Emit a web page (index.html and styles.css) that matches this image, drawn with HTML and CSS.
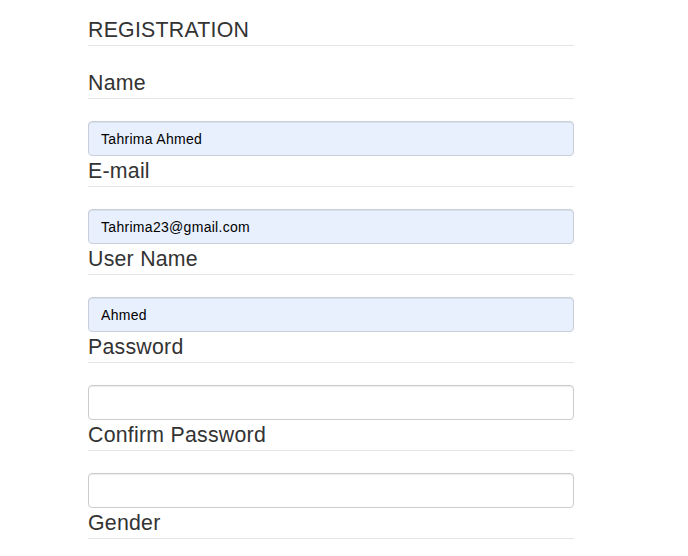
FILE: index.html
```html
<!DOCTYPE html>
<html lang="en">
<head>
<meta charset="utf-8">
<title>Registration</title>
<link rel="stylesheet" href="styles.css">
</head>
<body>
<form class="reg-form">
  <fieldset class="reg-set">
    <legend class="reg-legend">REGISTRATION</legend>
    <legend class="reg-legend">Name</legend>
    <input class="reg-input is-filled" type="text" value="Tahrima Ahmed">
    <legend class="reg-legend">E-mail</legend>
    <input class="reg-input is-filled" type="text" value="Tahrima23@gmail.com">
    <legend class="reg-legend">User Name</legend>
    <input class="reg-input is-filled" type="text" value="Ahmed">
    <legend class="reg-legend">Password</legend>
    <input class="reg-input" type="password">
    <legend class="reg-legend">Confirm Password</legend>
    <input class="reg-input" type="password">
    <legend class="reg-legend">Gender</legend>
  </fieldset>
</form>
</body>
</html>
```
FILE: styles.css
```css
html {
  overflow: hidden;
}

body {
  margin: 0;
  background: #fff;
  font-family: "Liberation Sans", Arial, Helvetica, sans-serif;
  font-size: 14px;
  color: #333;
}

.reg-form {
  width: 486px;
  margin-left: 88px;
  padding-top: 15px;
}

.reg-set {
  margin: 0;
  padding: 0;
  border: 0;
  min-width: 0;
  display: flex;
  flex-direction: column;
}

.reg-legend {
  display: block;
  width: 100%;
  padding: 0;
  margin: 0 0 22px 0;
  font-size: 21.3px;
  line-height: 30px;
  letter-spacing: 0.25px;
  color: #333;
  border: 0;
  border-bottom: 1px solid #e5e5e5;
  float: none;
}

.reg-input {
  display: block;
  box-sizing: border-box;
  width: 100%;
  height: 35px;
  margin: 0;
  padding: 6px 12px;
  font-family: "Liberation Sans", Arial, Helvetica, sans-serif;
  font-size: 14px;
  letter-spacing: 0.3px;
  color: #555;
  background: #fff;
  border: 1px solid #ccc;
  border-radius: 4px;
  box-shadow: inset 0 1px 1px rgba(0, 0, 0, 0.075);
  outline: none;
}

.reg-input.is-filled {
  background: #e8f0fe;
  color: #000;
  border-color: #c9ced8;
}
```
